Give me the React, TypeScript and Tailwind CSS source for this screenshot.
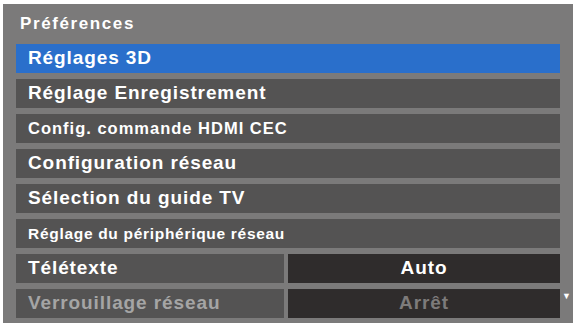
import React from 'react';

type Row = {
    label: string;
    size?: string;
    selected?: boolean;
    disabled?: boolean;
    value?: string;
};

const BIG = 'text-[19px] tracking-[0.9px]';

const rows: Row[] = [
    { label: 'Réglages 3D', selected: true },
    { label: 'Réglage Enregistrement' },
    { label: 'Config. commande HDMI CEC', size: 'text-[16.5px] tracking-[1px]' },
    { label: 'Configuration réseau' },
    { label: 'Sélection du guide TV' },
    { label: 'Réglage du périphérique réseau', size: 'text-[15.5px] tracking-[0.7px]' },
    { label: 'Télétexte', value: 'Auto' },
    { label: 'Verrouillage réseau', value: 'Arrêt', disabled: true },
];

const MenuRow: React.FC<{ row: Row }> = ({ row }) => {
    const textSize = row.size ?? BIG;
    const textColor = row.disabled ? 'text-[#a5a5a5]' : 'text-white';

    if (row.value) {
        return (
            <div className="flex h-[29px] gap-[4px]">
                <div className={`flex items-center w-[268px] bg-[#545353] pl-[12px] font-bold ${textSize} ${textColor}`}>
                    {row.label}
                </div>
                <div
                    className={`flex flex-1 items-center justify-center bg-[#2f2c2c] font-bold ${BIG} ${
                        row.disabled ? 'text-[#7d7b7b]' : 'text-white'
                    }`}
                >
                    {row.value}
                </div>
            </div>
        );
    }

    return (
        <div
            className={`flex items-center h-[29px] pl-[12px] font-bold ${textSize} ${textColor} ${
                row.selected ? 'bg-[#2a6fcb]' : 'bg-[#545353]'
            }`}
        >
            {row.label}
        </div>
    );
};

export default function App() {
    return (
        <div
            className="relative w-[573px] h-[323px] bg-white pt-[4px] pl-[3px]"
            style={{ fontFamily: '"Liberation Sans", Arial, sans-serif' }}
        >
            <div className="h-full bg-[#7b7a7a] flex flex-col">
                <div className="h-[40px] pl-[17px] flex items-center text-white font-bold text-[17px] tracking-[1.6px]">
                    Préférences
                </div>
                <div className="flex flex-col gap-[6px] pl-[13px] pr-[13px]">
                    {rows.map((r) => (
                        <MenuRow key={r.label} row={r} />
                    ))}
                </div>
            </div>
            {/* scroll hint */}
            <div className="absolute left-[562px] top-[292px] text-white text-[9px] leading-none">▼</div>
        </div>
    );
}
